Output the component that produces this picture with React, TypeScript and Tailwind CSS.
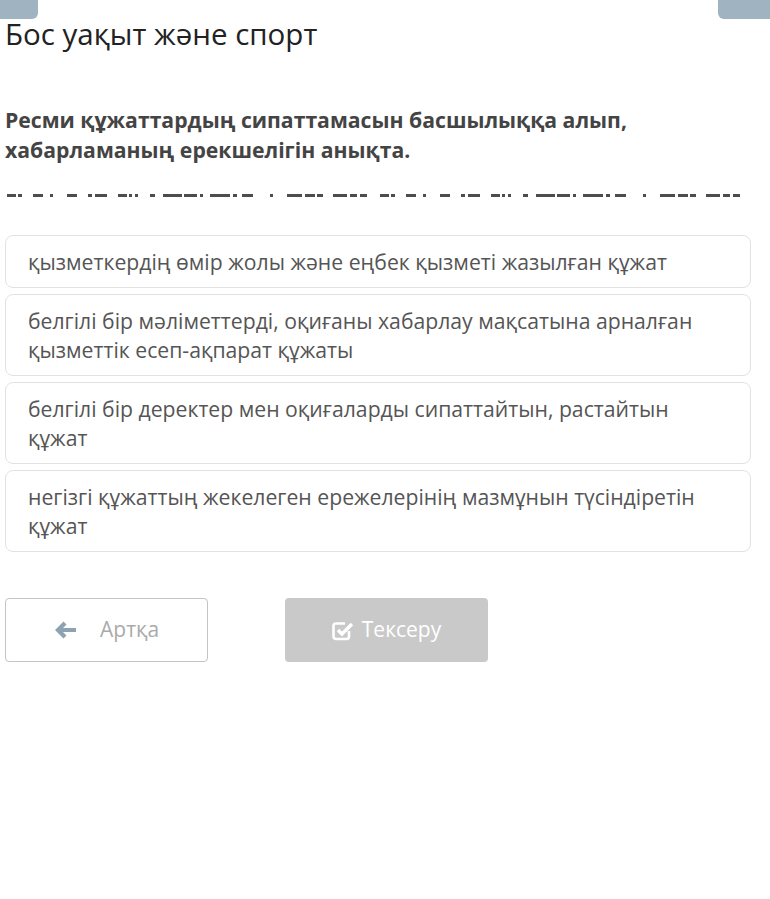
const options = [
  "қызметкердің өмір жолы және еңбек қызметі жазылған құжат",
  "белгілі бір мәліметтерді, оқиғаны хабарлау мақсатына арналған қызметтік есеп-ақпарат құжаты",
  "белгілі бір деректер мен оқиғаларды сипаттайтын, растайтын құжат",
  "негізгі құжаттың жекелеген ережелерінің мазмұнын түсіндіретін құжат",
];

// the clipped-off line under the question: [start, end] in px, one half; repeated once
const dashes: [number, number][] = [
  [7, 16], [18, 22], [33, 43], [50, 53], [67, 77], [88, 92], [95, 107], [118, 127],
  [129, 132], [135, 138], [150, 155], [163, 182], [184, 197], [200, 203], [210, 230],
  [233, 237], [242, 253], [270, 273], [287, 302], [305, 315], [317, 323], [333, 347],
  [350, 357], [360, 367],
];

function DashLine() {
  const all = [...dashes, ...dashes.map(([a, b]) => [a + 373, b + 373] as [number, number])];
  return (
    <svg width="760" height="4" className="block">
      {all.map(([a, b], i) => (
        <rect key={i} x={a - 5} y={0} width={b - a} height={3} fill="#4d4d4d" />
      ))}
    </svg>
  );
}

function ArrowLeft() {
  return (
    <svg width="21" height="18" viewBox="0 0 21 18" className="shrink-0">
      <path d="M0 9 L8.5 0.5 L11.5 3.5 L8 7 H21 V11 H8 L11.5 14.5 L8.5 17.5 Z" fill="#8ea3b1" />
    </svg>
  );
}

function CheckSquare() {
  return (
    <svg width="22" height="21" viewBox="0 0 22 21" className="shrink-0" fill="none" stroke="white">
      <path d="M17 11 V16.5 a2.5 2.5 0 0 1 -2.5 2.5 H4 a2.5 2.5 0 0 1 -2.5 -2.5 V6 a2.5 2.5 0 0 1 2.5 -2.5 H13" strokeWidth="2.6" />
      <path d="M6 10 L10 14 L20 4" strokeWidth="3.4" strokeLinejoin="miter" />
    </svg>
  );
}

export default function App() {
  return (
    <div className="min-h-[899px] w-[770px] bg-white font-['Open_Sans',sans-serif]">
      <div className="flex h-[19px] justify-between">
        <div className="w-[38px] rounded-br-[6px] bg-[#9fb3c0]" />
        <div className="w-[52px] rounded-bl-[6px] bg-[#9fb3c0]" />
      </div>

      <div className="pl-[5px] pr-[19px]">
        <h1 className="-mt-px text-[29.5px] leading-[32px] text-[#222]">Бос уақыт және спорт</h1>

        <p className="mt-[55px] text-[21.2px] font-bold leading-[30px] text-[#444]">
          Ресми құжаттардың сипаттамасын басшылыққа алып,
          <br />
          хабарламаның ерекшелігін анықта.
        </p>

        <div className="mt-[29px]">
          <DashLine />
        </div>

        <div className="mt-[37px] flex flex-col gap-[6px]">
          {options.map((o) => (
            <div
              key={o}
              className="rounded-[8px] border border-[#e2e2e2] py-[11px] pl-[22px] pr-[40px] text-[21.2px] leading-[29px] text-[#555]"
            >
              {o}
            </div>
          ))}
        </div>

        <div className="mt-[46px] flex gap-[77px]">
          <button
            type="button"
            className="flex h-[64px] w-[203px] items-center rounded-[4px] border border-[#c4c4c4] bg-white pl-[49px] text-[21px] text-[#aaa]"
          >
            <ArrowLeft />
            <span className="ml-[24px]">Артқа</span>
          </button>
          <button
            type="button"
            className="flex h-[64px] w-[203px] items-center justify-center gap-[8px] rounded-[4px] bg-[#c9c9c9] text-[21px] text-white"
          >
            <CheckSquare />
            <span>Тексеру</span>
          </button>
        </div>
      </div>
    </div>
  );
}
